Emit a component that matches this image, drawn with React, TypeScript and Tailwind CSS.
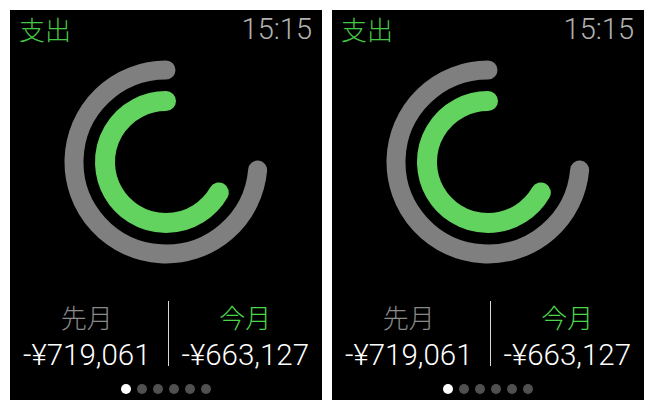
import React from 'react';

const CJK = { fontFamily: '"Noto Sans CJK JP", "Noto Sans", sans-serif' };

const GRAY_ARC = 'M106 14 A92 92 0 1 0 197.65 114.02';
const GREEN_ARC = 'M106 45 A61 61 0 1 0 158.83 136.5';

function Rings() {
  return (
    <svg width="212" height="212" viewBox="0 0 212 212" className="block mx-auto">
      <path d={GRAY_ARC} fill="none" stroke="#7f7f7f" strokeWidth="19" strokeLinecap="round" />
      <path d={GREEN_ARC} fill="none" stroke="#63d35f" strokeWidth="20" strokeLinecap="round" />
    </svg>
  );
}

function WatchScreen() {
  return (
    <div className="w-[312px] h-[390px] bg-black flex flex-col font-['Roboto','Liberation_Sans',Arial,sans-serif] font-light">
      {/* Header */}
      <div className="h-[46px] flex items-start justify-between pl-[9px] pr-[10px]">
        <span className="text-[26px] leading-[34px] mt-[2px] text-[#45c845]" style={CJK}>
          支出
        </span>
        <span className="text-[29px] leading-[34px] mt-[2px] text-[#b0b0b0]">15:15</span>
      </div>

      <Rings />

      {/* Last month vs this month */}
      <div className="flex mt-[34px]">
        <div className="flex-1 flex flex-col items-center pr-[4px]">
          <span className="text-[26px] leading-[30px] text-[#8a8a8a]" style={CJK}>
            先月
          </span>
          <span className="text-[29.5px] leading-[34px] mt-[6px] text-white">-¥719,061</span>
        </div>
        <div className="w-px h-[65px] bg-[#d8d8d8] -mt-[1px]" />
        <div className="flex-1 flex flex-col items-center">
          <span className="text-[26px] leading-[30px] text-[#4cd64c]" style={CJK}>
            今月
          </span>
          <span className="text-[29.5px] leading-[34px] mt-[6px] text-white">-¥663,127</span>
        </div>
      </div>

      {/* Page dots */}
      <div className="flex justify-center gap-[6px] mt-[12px]">
        {Array.from({ length: 6 }).map((_, i) => (
          <span
            key={i}
            className={`w-[10px] h-[10px] rounded-full ${i === 0 ? 'bg-white' : 'bg-[#505050]'}`}
          />
        ))}
      </div>
    </div>
  );
}

export default function App() {
  return (
    <div className="w-[654px] h-[410px] bg-white flex gap-[10px] p-[10px]">
      <WatchScreen />
      <WatchScreen />
    </div>
  );
}
